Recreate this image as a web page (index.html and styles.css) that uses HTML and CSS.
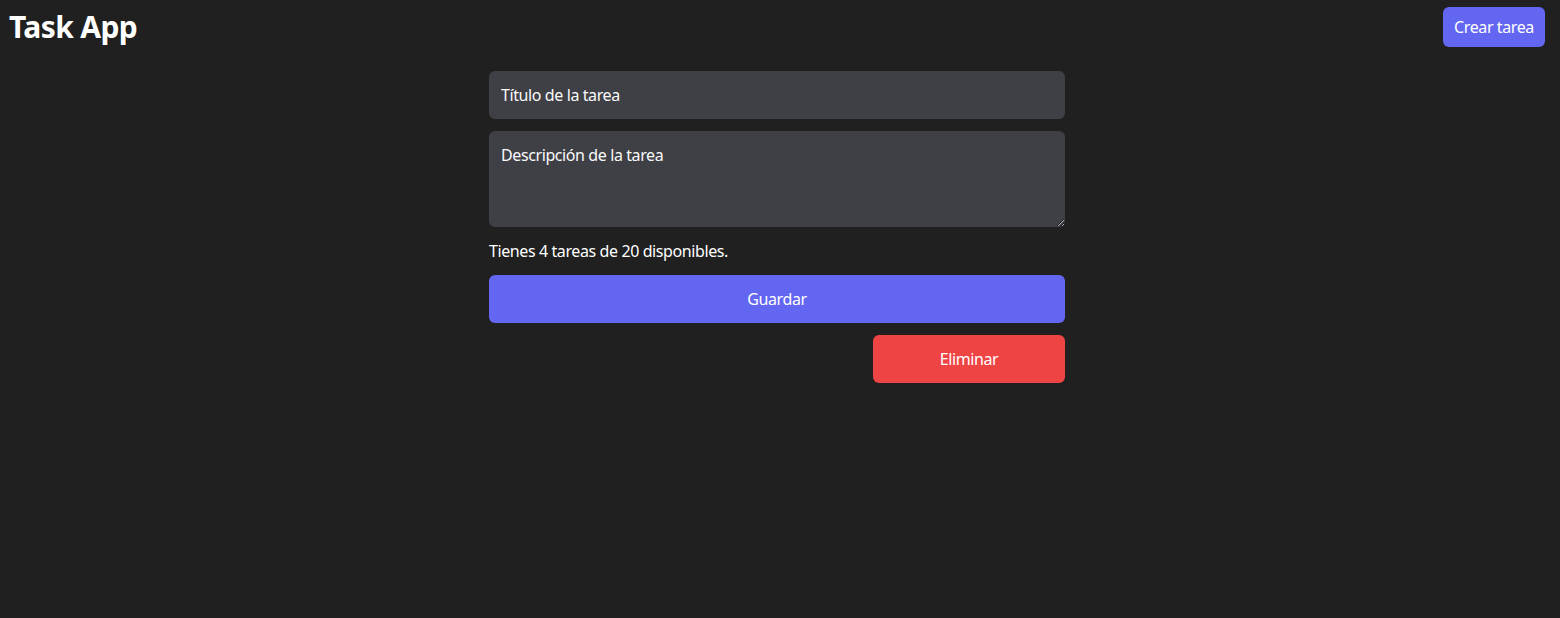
FILE: index.html
```html
<!DOCTYPE html>
<html lang="es">
<head>
<meta charset="utf-8">
<title>Task App</title>
<link rel="stylesheet" href="styles.css">
</head>
<body>
<header class="topbar">
  <h1 class="brand">Task App</h1>
  <button class="btn btn-create" type="button">Crear tarea</button>
</header>
<main class="main">
  <form class="task-form">
    <input class="field" type="text" placeholder="Título de la tarea">
    <textarea class="field field-area" rows="3" placeholder="Descripción de la tarea"></textarea>
    <p class="counter">Tienes 4 tareas de 20 disponibles.</p>
    <button class="btn btn-save" type="button">Guardar</button>
    <div class="actions">
      <button class="btn btn-delete" type="button">Eliminar</button>
    </div>
  </form>
</main>
</body>
</html>
```
FILE: styles.css
```css
* { box-sizing: border-box; }
html, body { margin: 0; padding: 0; }
body {
  background: #202020;
  color: #fff;
  font-family: "Noto Sans", "Open Sans", sans-serif;
  font-size: 16px;
  line-height: 24px;
  letter-spacing: -0.4px;
  min-height: 618px;
}
.topbar {
  display: flex;
  justify-content: space-between;
  align-items: center;
  padding: 7px 15px 0 9px;
}
.brand {
  margin: 0;
  font-size: 30px;
  line-height: 40px;
  font-weight: 700;
  letter-spacing: -0.6px;
}
.btn {
  border: none;
  border-radius: 6px;
  color: #fff;
  font-family: inherit;
  font-size: 16px;
  line-height: 24px;
  letter-spacing: -0.4px;
  white-space: nowrap;
  cursor: pointer;
}
.btn-create {
  background: #6366f1;
  padding: 8px 0;
  height: 40px;
  width: 102px;
}
.main {
  padding: 24px 6px 0 0;
}
.task-form {
  width: 576px;
  margin: 0 auto;
  display: flex;
  flex-direction: column;
}
.field {
  display: block;
  width: 100%;
  background: #3f3f46;
  border: none;
  border-radius: 6px;
  padding: 12px;
  color: #fff;
  font-family: inherit;
  font-size: 16px;
  line-height: 24px;
  letter-spacing: -0.4px;
  margin-bottom: 12px;
  outline: none;
}
.field::placeholder { color: #fafafa; opacity: 1; }
.field-area {
  height: 96px;
  margin-bottom: 0;
}
.counter {
  margin: 12px 0;
}
.btn-save {
  background: #6366f1;
  height: 48px;
  padding: 12px;
  width: 100%;
}
.actions {
  display: flex;
  justify-content: flex-end;
  margin-top: 12px;
}
.btn-delete {
  background: #ef4444;
  height: 48px;
  padding: 12px;
  width: 192px;
}
```
